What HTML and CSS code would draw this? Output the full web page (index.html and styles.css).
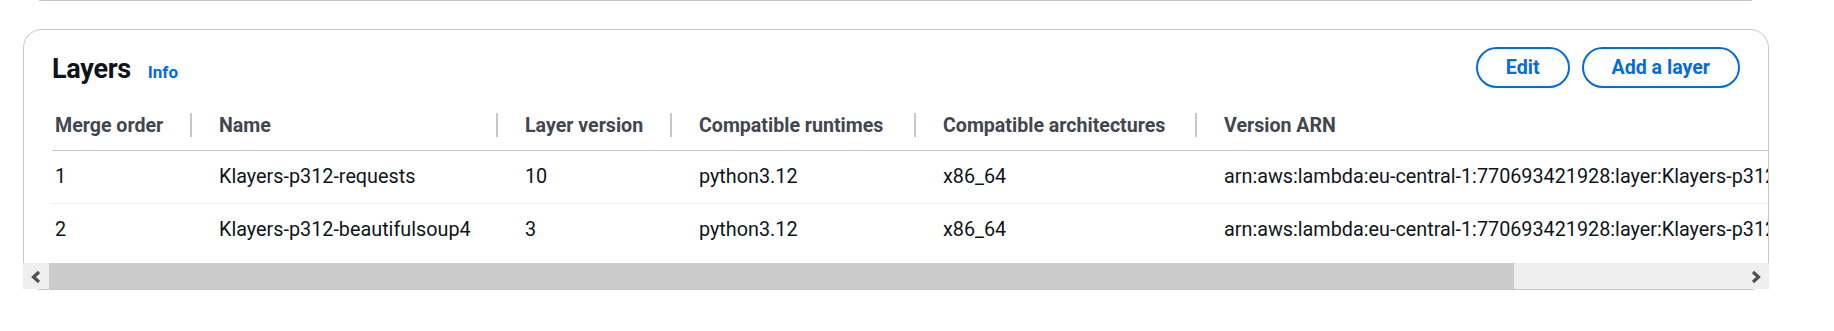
FILE: index.html
```html
<!DOCTYPE html>
<html lang="en">
<head>
<meta charset="utf-8">
<title>Layers</title>
<link rel="stylesheet" href="styles.css">
</head>
<body>
<div class="page">
  <div class="prev-divider"></div>
  <section class="card">
    <header class="card-header">
      <div class="title-group">
        <h2 class="title">Layers</h2>
        <a class="info-link" href="#">Info</a>
      </div>
      <div class="actions">
        <button class="btn" type="button">Edit</button>
        <button class="btn" type="button">Add a layer</button>
      </div>
    </header>
    <div class="table-wrap">
      <table class="layers-table">
        <colgroup>
          <col class="c1"><col class="c2"><col class="c3"><col class="c4"><col class="c5"><col class="c6">
        </colgroup>
        <thead>
          <tr>
            <th class="first">Merge order</th>
            <th>Name</th>
            <th>Layer version</th>
            <th>Compatible runtimes</th>
            <th>Compatible architectures</th>
            <th class="last">Version ARN</th>
          </tr>
        </thead>
        <tbody>
          <tr>
            <td class="first">1</td>
            <td>Klayers-p312-requests</td>
            <td>10</td>
            <td>python3.12</td>
            <td>x86_64</td>
            <td>arn:aws:lambda:eu-central-1:770693421928:layer:Klayers-p312-requests:10</td>
          </tr>
          <tr>
            <td class="first">2</td>
            <td>Klayers-p312-beautifulsoup4</td>
            <td>3</td>
            <td>python3.12</td>
            <td>x86_64</td>
            <td>arn:aws:lambda:eu-central-1:770693421928:layer:Klayers-p312-beautifulsoup4:3</td>
          </tr>
        </tbody>
      </table>
    </div>
    <div class="hscroll">
      <div class="hs-btn">
        <svg width="26" height="26" viewBox="0 0 26 26"><polyline points="16,9 10.5,14 16,19" fill="none" stroke="#505050" stroke-width="3.2"/></svg>
      </div>
      <div class="hs-thumb"></div>
      <div class="hs-track"></div>
      <div class="hs-btn">
        <svg width="26" height="26" viewBox="0 0 26 26"><polyline points="10,9 15.5,14 10,19" fill="none" stroke="#505050" stroke-width="3.2"/></svg>
      </div>
    </div>
  </section>
</div>
</body>
</html>
```

FILE: styles.css
```css
html, body {
  margin: 0;
  padding: 0;
  background: #ffffff;
}

body {
  font-family: Roboto, "Liberation Sans", Arial, sans-serif;
  color: #0f141a;
}

.page {
  width: 1834px;
}

.prev-divider {
  margin-left: 39px;
  width: 1713px;
  height: 1px;
  background: #c6c6cd;
}

.card {
  box-sizing: border-box;
  margin-top: 28px;
  margin-left: 23px;
  width: 1746px;
  border: 1px solid #c6c6cd;
  border-radius: 19px;
  background: #ffffff;
}

.card-header {
  display: flex;
  align-items: center;
  justify-content: space-between;
  padding: 17px 28px 12px 28px;
}

.title-group {
  display: flex;
  align-items: baseline;
  gap: 17px;
  padding-top: 2px;
}

.title {
  margin: 0;
  font-size: 27px;
  line-height: 34px;
  font-weight: 700;
  letter-spacing: -0.3px;
  color: #0f141a;
}

.info-link {
  font-size: 17px;
  font-weight: 700;
  color: #006ce0;
  text-decoration: none;
}

.actions {
  display: flex;
  gap: 12px;
}

.btn {
  box-sizing: border-box;
  height: 41px;
  padding: 0 28px;
  border: 2px solid #006ce0;
  border-radius: 21px;
  background: #ffffff;
  color: #006ce0;
  font-family: Roboto, "Liberation Sans", Arial, sans-serif;
  font-size: 19.6px;
  font-weight: 700;
  line-height: 37px;
}

.table-wrap {
  overflow: hidden;
  padding: 0 0 7px 28px;
}

.layers-table {
  table-layout: fixed;
  border-collapse: separate;
  border-spacing: 0;
  width: 2044px;
  white-space: nowrap;
}

.c1 { width: 139px; }
.c2 { width: 306px; }
.c3 { width: 174px; }
.c4 { width: 244px; }
.c5 { width: 281px; }
.c6 { width: 900px; }

.layers-table th,
.layers-table td {
  box-sizing: border-box;
  text-align: left;
  padding: 12px 0 12px 28px;
  line-height: 28px;
  font-size: 19.6px;
}

.layers-table th {
  position: relative;
  padding-bottom: 10px;
  font-weight: 700;
  color: #424650;
  border-bottom: 1px solid #c6c6cd;
}

.layers-table th::after {
  content: "";
  position: absolute;
  right: -1px;
  top: 13px;
  width: 2px;
  height: 24px;
  background: #c6c6cd;
}

.layers-table th.last::after {
  display: none;
}

.layers-table td {
  font-size: 19.8px;
  font-weight: 400;
  color: #0f141a;
}

.layers-table tbody tr:first-child td {
  border-bottom: 1px solid #ebebf0;
}

.layers-table .first {
  padding-left: 3px;
}

.hscroll {
  display: flex;
  height: 26px;
  margin: 0 -1px;
}

.hs-btn {
  width: 26px;
  height: 26px;
  flex: none;
  background: #efefef;
}

.hs-btn svg {
  display: block;
}

.hs-thumb {
  width: 1465px;
  flex: none;
  background: #cbcbcb;
}

.hs-track {
  flex: 1;
  background: #efefef;
}
```
